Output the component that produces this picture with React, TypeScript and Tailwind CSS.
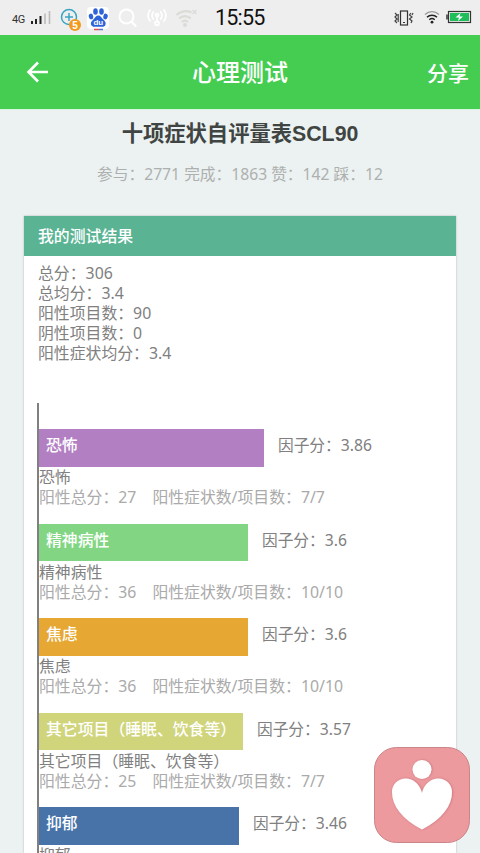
import type { ReactNode } from 'react'

interface Factor {
  name: string
  score: string
  total: number
  ratio: string
  width: number
  color: string
}

const STATS = [
  { label: '总分', value: '306' },
  { label: '总均分', value: '3.4' },
  { label: '阳性项目数', value: '90' },
  { label: '阴性项目数', value: '0' },
  { label: '阳性症状均分', value: '3.4' },
]

const FACTORS: Factor[] = [
  { name: '恐怖', score: '3.86', total: 27, ratio: '7/7', width: 225, color: '#b37fc3' },
  { name: '精神病性', score: '3.6', total: 36, ratio: '10/10', width: 209, color: '#82d683' },
  { name: '焦虑', score: '3.6', total: 36, ratio: '10/10', width: 209, color: '#e6a733' },
  { name: '其它项目（睡眠、饮食等）', score: '3.57', total: 25, ratio: '7/7', width: 204, color: '#d0d57c' },
]

// last row on screen, its details are below the fold
const LAST = { name: '抑郁', score: '3.46', width: 200, color: '#4873a9' }

function StatusIcon({ w, h, className, children }: { w: number; h: number; className?: string; children: ReactNode }) {
  return (
    <svg width={w} height={h} viewBox={`0 0 ${w} ${h}`} fill="none" className={`shrink-0 ${className ?? ''}`}>
      {children}
    </svg>
  )
}

function StatusBar() {
  return (
    <div className="relative flex h-[35px] shrink-0 items-center bg-[#eeeeee] pl-[12px] pr-[8px]">
      <span className="mt-[3px] w-[18px] font-['Roboto'] text-[11px] leading-none tracking-[-0.5px] text-[#333]">4G</span>
      <StatusIcon w={21} h={16} className="mt-[-1px]">
        <path d="M2 12v3M6 10v5" stroke="#222" strokeWidth="2" />
        <path d="M10.500 7v8" stroke="#222" strokeWidth="2" />
        <path d="M15 4.500V15M19.500 2v13" stroke="#bbb" strokeWidth="1.600" />
      </StatusIcon>

      {/* health shortcut with a count on it */}
      <StatusIcon w={22} h={24} className="ml-[9px] mt-[5px]">
        <circle cx="9" cy="9" r="7.500" stroke="#38a4c4" strokeWidth="1.500" />
        <path d="M9 5v8M5 9h8" stroke="#38a4c4" strokeWidth="1.500" />
        <circle cx="15" cy="17" r="6" fill="#f39a1e" />
        <text x="15" y="20.800" textAnchor="middle" fontSize="10" fontWeight="bold" fontFamily="Liberation Sans, sans-serif" fill="#fff">5</text>
      </StatusIcon>

      <StatusIcon w={24} h={26} className="ml-[4px]">
        <rect x="1" y="2" width="22" height="22" rx="4" fill="#fff" />
        <g fill="#2d63d8">
          <ellipse cx="9.500" cy="6.500" rx="2.300" ry="3.200" />
          <ellipse cx="15.500" cy="6.500" rx="2.300" ry="3.200" />
          <ellipse cx="5" cy="11.500" rx="2.200" ry="2.900" transform="rotate(-12 5 11.5)" />
          <ellipse cx="19.500" cy="11.500" rx="2.200" ry="2.900" transform="rotate(12 19.5 11.5)" />
          <path d="M12.300 10.500c2.200 0 3 2 4.700 3.700 2 2 3 3 2.600 5-.4 2-2 2.800-4.600 2.600H9.500c-2.600.2-4.400-.8-4.600-2.800-.2-2 1-3 2.700-4.800 1.500-1.600 2.500-3.700 4.700-3.700z" />
        </g>
        <text x="12.300" y="20.300" textAnchor="middle" fontSize="8" fontWeight="bold" fontFamily="Liberation Sans, sans-serif" fill="#fff">du</text>
        <path d="M8 24.500h5" stroke="#e84b4b" strokeWidth="1.500" />
        <path d="M13 24.500h4" stroke="#5677d8" strokeWidth="1.500" />
      </StatusIcon>

      <StatusIcon w={20} h={20} className="ml-[8px]">
        <circle cx="8.500" cy="8.500" r="7" stroke="#fff" strokeWidth="2" />
        <path d="M13.500 13.500l4.700 5" stroke="#fff" strokeWidth="2.200" />
      </StatusIcon>

      <StatusIcon w={22} h={19} className="ml-[8px]">
        <g stroke="#fff" strokeWidth="1.700" strokeLinecap="round">
          <path d="M4 2a9.500 9.500 0 0 0 0 11M18 2a9.500 9.500 0 0 1 0 11M7.300 4a6 6 0 0 0 0 7M14.700 4a6 6 0 0 1 0 7" />
          <path d="M11 8v6" />
          <circle cx="11" cy="7" r="1.500" />
          <circle cx="11" cy="15.300" r="2" />
        </g>
      </StatusIcon>

      <StatusIcon w={24} h={20} className="ml-[7px]">
        <g stroke="#dcdbd8" strokeWidth="2.200">
          <path d="M1.500 7a13 13 0 0 1 15-2.500M4.200 10.500a8 8 0 0 1 11.500 0M7 14a4.500 4.500 0 0 1 6 0" />
          <path d="M17.500 2l4 4M21.500 2l-4 4" strokeWidth="1.400" />
        </g>
        <circle cx="10" cy="17" r="2" fill="#dcdbd8" />
      </StatusIcon>

      <span className="absolute left-[215px] top-[6px] font-['Roboto'] text-[21.500px] leading-[23px] tracking-[-0.8px] text-[#111]">15:55</span>

      <StatusIcon w={20} h={18} className="ml-auto">
        <rect x="6.500" y="2" width="7" height="14" stroke="#333" strokeWidth="1.200" />
        <path d="M9 13.500h2" stroke="#333" strokeWidth="1" />
        <path d="M1 4l2 2-2 2 2 2-2 2 2 2M4.200 5v8M17 4l-1.500 2 2.500 2-2.500 2 2.500 2-1 2M19 4l-1 2" stroke="#444" strokeWidth="1.200" />
      </StatusIcon>
      <StatusIcon w={16} h={14} className="ml-[10px] mt-[-1px]">
        <path d="M1 4.500a10 10 0 0 1 14 0" stroke="#999" strokeWidth="1.300" />
        <path d="M3 7.300a7 7 0 0 1 10 0M5.300 9.800a4 4 0 0 1 5.400 0" stroke="#222" strokeWidth="1.500" />
        <circle cx="8" cy="12.200" r="1.400" fill="#222" />
      </StatusIcon>
      <StatusIcon w={26} h={14} className="ml-[6px] mt-[-2px]">
        <path d="M1 4.500v5" stroke="#333" strokeWidth="1.500" />
        <rect x="2.500" y="1.500" width="22" height="11" stroke="#333" strokeWidth="1.200" fill="#eee" />
        <rect x="4" y="3" width="19" height="8" fill="#1fbe5b" />
        <path d="M14.500 3l-5 4.500h3.500l-1 3.500 5-4.500h-3.500z" fill="#fff" />
      </StatusIcon>
    </div>
  )
}

function Header() {
  return (
    <header className="relative flex h-[75px] shrink-0 items-center justify-between border-b border-[#d6f7dc] bg-[#45cd52] pl-[26px] pr-[11px] text-white">
      <svg width="23" height="22" viewBox="0 0 23 22" fill="none" stroke="#fff" strokeWidth="2.600">
        <path d="M22 11H2.500M12 1.500L2.500 11l9.500 9.500" />
      </svg>
      <h1 className="absolute inset-x-0 text-center text-[24px] font-medium leading-[30px]">心理测试</h1>
      <span className="mt-[2px] text-[21px] font-medium leading-[30px]">分享</span>
    </header>
  )
}

function FactorBar({ name, score, width, color }: Pick<Factor, 'name' | 'score' | 'width' | 'color'>) {
  return (
    <div className="flex h-[37.500px]">
      <div
        className="shrink-0 whitespace-nowrap pl-[7px] font-medium leading-[33px] text-white"
        style={{ width, background: color }}
      >
        {name}
      </div>
      <span className="ml-[14px] text-[15.700px] leading-[32px]">因子分：{score}</span>
    </div>
  )
}

function FactorRow({ factor }: { factor: Factor }) {
  return (
    <li className="h-[94.500px]">
      <FactorBar {...factor} />
      <p className="mt-[0.500px]">{factor.name}</p>
      <p className="whitespace-nowrap text-[#aaaaaa]">
        <span className="mr-[16px]">阳性总分：{factor.total}</span>
        <span>阳性症状数/项目数：{factor.ratio}</span>
      </p>
    </li>
  )
}

function HeartBadge() {
  return (
    <svg className="absolute left-[374px] top-[747px]" width="96" height="96" viewBox="0 0 96 96">
      <defs>
        <filter id="soft" x="-20%" y="-20%" width="140%" height="140%">
          <feDropShadow dx="0.500" dy="0" stdDeviation="1" floodColor="#a84c52" floodOpacity="0.600" />
        </filter>
      </defs>
      <rect x="0.500" y="0.500" width="95" height="95" rx="22" fill="#ed9a9f" stroke="#cb8488" />
      <g fill="#fff" filter="url(#soft)">
        <circle cx="48" cy="22.500" r="9.500" />
        <path d="M48 46C46 37 39 31.500 32 31.500C23 31.500 18 38 18 45C18 59 28 72 48 82.500C68 72 78 59 78 45C78 38 73 31.500 64 31.500C57 31.500 50 37 48 46Z" />
      </g>
    </svg>
  )
}

export default function App() {
  return (
    <div className="relative flex h-[853px] w-[480px] flex-col overflow-hidden bg-[#ebf2f1] font-['Noto_Sans','Noto_Sans_CJK_SC',sans-serif] text-[15.850px] leading-[20px] text-[#808080]">
      <StatusBar />
      <Header />

      <div className="shrink-0 pt-[9px] text-center">
        <h2 className="font-['Liberation_Sans','Noto_Sans_CJK_SC',sans-serif] text-[21.300px] font-bold leading-[30px] text-[#404442]">
          十项症状自评量表SCL90
        </h2>
        <p className="mt-[15px] text-[15.700px] text-[#aeb0af]">参与：2771 完成：1863 赞：142 踩：12</p>
      </div>

      <section className="mx-6 mt-[32px] flex min-h-0 grow flex-col bg-white shadow-[0_0_2px_rgba(0,0,0,0.25)]">
        <h3 className="h-10 shrink-0 bg-[#5ab494] pl-[14px] font-medium leading-[40px] text-white">我的测试结果</h3>
        <div className="shrink-0 px-[14px] pt-[7px] leading-[20.100px]">
          {STATS.map((s) => (
            <p key={s.label}>
              {s.label}：{s.value}
            </p>
          ))}
        </div>
        <ul className="ml-[13px] mt-[40px] min-h-0 grow overflow-hidden border-l-2 border-[#808080] pt-[26px]">
          {FACTORS.map((f) => (
            <FactorRow key={f.name} factor={f} />
          ))}
          <li>
            <FactorBar {...LAST} />
            <p className="mt-[0.500px]">{LAST.name}</p>
          </li>
        </ul>
      </section>

      <HeartBadge />
    </div>
  )
}
